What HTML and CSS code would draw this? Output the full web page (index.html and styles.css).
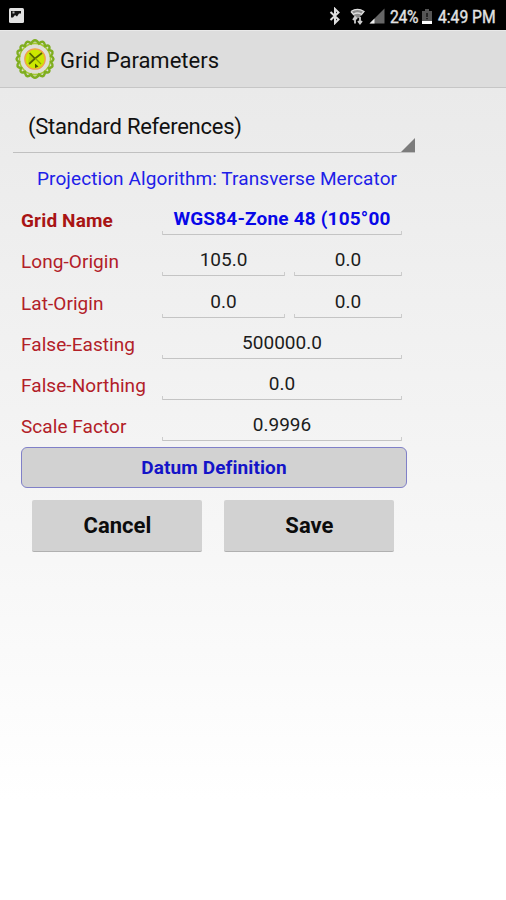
FILE: index.html
```html
<!DOCTYPE html>
<html lang="en">

<head>
    <meta charset="UTF-8">
    <meta name="viewport" content="width=device-width, initial-scale=1.0">
    <title>Grid Parameters</title>
    <link rel="stylesheet" href="styles.css">
</head>

<body>
    <div class="status-bar">
        <svg class="picture-icon" width="16" height="16" viewBox="0 0 16 16">
            <rect x="1" y="0" width="15" height="15" rx="1.500" fill="#e2e2e2" />
            <path d="M3 3h10v2.500h-2l-2 3-2-1.500-2 2.500H3z" fill="#151515" />
            <path d="M4.500 3.500h2v2h-2z" fill="#bbb" />
        </svg>
        <div class="status-right">
            <svg class="bluetooth-icon" width="12" height="18" viewBox="0 0 12 18">
                <path d="M1.500 5l8 7.500L6 16V2l3.500 3.500L1.500 13" fill="none" stroke="#ddd" stroke-width="2" />
            </svg>
            <svg class="wifi-icon" width="15" height="17" viewBox="0 0 15 17">
                <path d="M0.500 3.500Q7.500-1.500 14.500 3.500L9 10H6z" fill="#8c8c8c" />
                <path d="M1 3.500Q7.500-0.800 14 3.500L11 7M1 3.500L4 7M4 6Q7.500 4 11 6" fill="none" stroke="#ddd" stroke-width="1.300" />
                <path d="M5 9v6.500M3 12l2-3 2 2M10 9v6.500M8 13l2 2.500 2-2.500" fill="none" stroke="#ccc" stroke-width="1.800" />
            </svg>
            <svg class="signal-icon" width="16" height="16" viewBox="0 0 16 16">
                <path d="M15.500 0.500v15H0.500z" fill="#666" />
                <path d="M5.500 10.500v5H0.500z" fill="#eee" />
            </svg>
            <span class="battery-text">24%</span>
            <svg class="battery-icon" width="10" height="15" viewBox="0 0 10 15">
                <path d="M3 0h4v2h3v13H0V2h3z" fill="#555" />
                <path d="M4.300 4h1.400v4H4.300zM4.300 9h1.400v1.300H4.300z" fill="#111" />
                <path d="M0 12h10v3H0z" fill="#fff" />
            </svg>
            <span class="clock">4:49 PM</span>
        </div>
    </div>

    <header class="app-bar">
        <svg class="logo" width="40" height="40" viewBox="0 0 40 40">
            <circle cx="20" cy="20" r="16" fill="#dfdfd8" />
            <circle cx="20" cy="20" r="15.600" fill="none" stroke="#a5c832" stroke-width="1.600" />
            <path class="gear" d="M16 4.500Q20-2 24 4.500Q29 0 30 7Q36 5 34 11Q40 12 36 17Q41 20 36 23Q40 28 34 29Q36 35 30 33Q29 40 24 35.500Q20 42 16 35.500Q11 40 10 33Q4 35 6 29Q0 28 4 23Q-1 20 4 17Q0 12 6 11Q4 5 10 7Q11 0 16 4.500z" fill="none" stroke="#7fae20" stroke-width="2.400" />
            <circle cx="20" cy="20" r="10.200" fill="#cce800" stroke="#f0a04c" stroke-width="1.300" />
            <path d="M15 13.500l5 6L13 24z" fill="#b2d000" />
            <path d="M14.500 14l5.500 5.500 7-5.500M20 19.500L14 25" fill="none" stroke="#566400" stroke-width="1.700" />
            <path d="M20 24.500l3.500 3-3.500 1.500z" fill="#4b5600" />
            <path d="M20.500 19.500l5.500 5.500" stroke="#8ca500" stroke-width="1.200" />
        </svg>
        <h1>Grid Parameters</h1>
    </header>

    <main>
        <div class="spinner">
            <span>(Standard References)</span>
            <svg class="spinner-arrow" width="14" height="14" viewBox="0 0 14 14">
                <path d="M14 0v14H0z" fill="#7c7c7c" />
            </svg>
        </div>
        <p class="algorithm">Projection Algorithm: Transverse Mercator</p>

        <section class="params">
            <div class="row name-row">
                <label>Grid Name</label>
                <div class="field">WGS84-Zone 48 (105°00</div>
            </div>
            <div class="row">
                <label>Long-Origin</label>
                <div class="field">105.0</div>
                <div class="field minutes">0.0</div>
            </div>
            <div class="row">
                <label>Lat-Origin</label>
                <div class="field">0.0</div>
                <div class="field minutes">0.0</div>
            </div>
            <div class="row">
                <label>False-Easting</label>
                <div class="field">500000.0</div>
            </div>
            <div class="row">
                <label>False-Northing</label>
                <div class="field">0.0</div>
            </div>
            <div class="row">
                <label>Scale Factor</label>
                <div class="field">0.9996</div>
            </div>
        </section>

        <button class="datum-btn" type="button">Datum Definition</button>
        <div class="actions">
            <button type="button">Cancel</button>
            <button type="button">Save</button>
        </div>
    </main>
</body>

</html>
```
FILE: styles.css
```css
* {
    box-sizing: border-box;
}

body {
    margin: 0;
    height: 900px;
    overflow: hidden;
    font-family: Roboto, "Liberation Sans", sans-serif;
    background: linear-gradient(#eaeaea 88px, #f0f0f0 300px, #f7f7f7 560px, #ffffff 800px);
}

.status-bar {
    display: flex;
    justify-content: space-between;
    align-items: center;
    height: 30px;
    padding: 2px 9px 0 8px;
    background-color: #000;
    color: #e2e2e2;
    font-size: 18px;
}

.status-right {
    display: flex;
    align-items: center;
}

.wifi-icon {
    margin-left: 9px;
}

.signal-icon {
    margin-left: 4px;
}

.battery-text,
.clock {
    white-space: nowrap;
    transform: scaleX(0.87);
    transform-origin: left;
    -webkit-text-stroke: 0.4px #e2e2e2;
}

.battery-text {
    width: 29px;
    margin-left: 5px;
    letter-spacing: -0.3px;
}

.battery-icon {
    margin-left: 3px;
}

.clock {
    width: 59px;
    margin-left: 6px;
}

.app-bar {
    display: flex;
    align-items: center;
    height: 58px;
    padding: 0 0 0 15px;
    background-color: #ddd;
    border-top: 1px solid #e9e9e9;
    border-bottom: 1px solid #c6c6c6;
}

h1 {
    margin: 0 0 0 5px;
    padding-top: 3px;
    font-size: 22px;
    font-weight: normal;
    line-height: 26px;
    color: #111;
}

.spinner {
    display: flex;
    justify-content: space-between;
    align-items: flex-end;
    width: 402px;
    height: 65px;
    margin-left: 13px;
    padding-left: 15px;
    border-bottom: 1px solid #c0c0c0;
    font-size: 22px;
    line-height: 26px;
    letter-spacing: -0.25px;
    color: #111;
}

.spinner span {
    margin-bottom: 12px;
}

.algorithm {
    width: 370px;
    margin: 14px 0 0 37px;
    font-size: 19px;
    line-height: 24px;
    letter-spacing: 0.09px;
    white-space: nowrap;
    color: #2020e8;
}

.params {
    width: 402px;
    margin-top: 3px;
    padding-left: 21px;
}

.row {
    display: flex;
    height: 41.25px;
    padding-top: 13px;
}

.row label {
    width: 141px;
    padding-top: 2px;
    font-size: 19px;
    line-height: 24px;
    letter-spacing: 0.06px;
    white-space: nowrap;
    color: #b22028;
}

.field {
    flex: 1;
    height: 28px;
    font-size: 19px;
    line-height: 23px;
    text-align: center;
    white-space: nowrap;
    color: #1c1c1c;
    background:
        linear-gradient(#ccc, #ccc) left bottom / 1px 4px no-repeat,
        linear-gradient(#ccc, #ccc) right bottom / 1px 4px no-repeat,
        linear-gradient(#c4c4c4, #c4c4c4) left bottom / 100% 1px no-repeat;
}

.field.minutes {
    flex: 0 0 108px;
    margin-left: 9px;
}

.name-row label {
    font-weight: bold;
    letter-spacing: 0.15px;
    color: #a81414;
}

.name-row .field {
    font-weight: bold;
    letter-spacing: 0.18px;
    color: #0808e8;
}

button {
    border: none;
    padding: 0;
    font-family: inherit;
    font-weight: bold;
    background-color: #d2d2d2;
}

.datum-btn {
    display: block;
    width: 386px;
    height: 41px;
    margin: 5px 0 0 21px;
    border: 1px solid #8080c8;
    border-radius: 6px;
    font-size: 19px;
    letter-spacing: 0.1px;
    color: #1414c8;
}

.actions {
    display: flex;
    gap: 22px;
    margin: 12px 0 0 32.4px;
}

.actions button {
    width: 170px;
    height: 52px;
    padding-top: 1px;
    border-bottom: 1px solid #b0b0b0;
    border-radius: 2px;
    font-size: 22px;
    color: #0c0c0c;
}
```
